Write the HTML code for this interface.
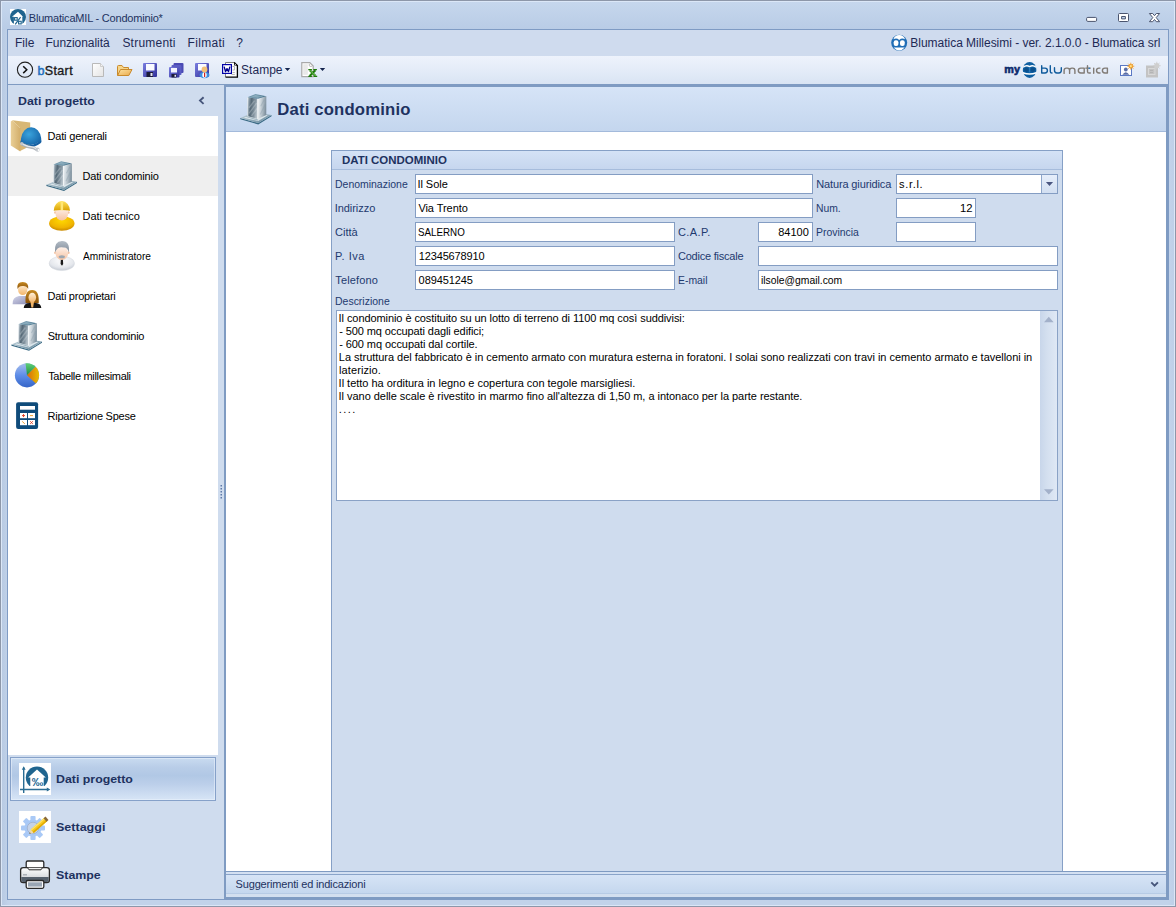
<!DOCTYPE html>
<html><head><meta charset="utf-8">
<style>
*{box-sizing:border-box;margin:0;padding:0}
html,body{width:1176px;height:907px;overflow:hidden}
body{font-family:"Liberation Sans",sans-serif;background:#c2d3ea;position:relative}
div{position:absolute}
.t{white-space:pre;line-height:16px;height:16px}
#frame{left:0;top:0;width:1176px;height:907px;border:1px solid #8d97a9;box-shadow:inset 0 0 0 1px #dbe7f7;background:linear-gradient(90deg,#b7c9e2 0,#c2d3ea 8px,#c2d3ea 1168px,#bccee7 1176px)}
#tgrad{left:2px;top:2px;width:1172px;height:27px;background:linear-gradient(#c6d7ed,#b9cce6)}
#inner{left:7px;top:29px;width:1162px;height:871px;border:1px solid #7f9bc4;background:#cfdcee}
#menubar{left:8px;top:30px;width:1160px;height:26px;background:#cfdbee}
#toolbar{left:8px;top:56px;width:1160px;height:28px;background:linear-gradient(#eef3fc,#e4ecf8 50%,#d9e4f3)}
#tbline{left:8px;top:84px;width:1160px;height:1px;background:#7f9bc2}
#side{left:8px;top:85px;width:216px;height:814px;background:#cfdcee}
#navlist{left:8px;top:116px;width:210px;height:639px;background:#fff}
#navsel{left:8px;top:156px;width:210px;height:40px;background:#efefef}
#bigsel{left:10px;top:757px;width:206px;height:44px;background:linear-gradient(#c9dbf0 0,#b9cde8 22%,#b1c8e5 42%,#bccfea 62%,#d7e5f6 100%);border:1px solid #86a1c9;box-shadow:inset 0 0 0 1px rgba(235,243,252,.55)}
#main{left:224px;top:84px;width:944px;height:815px;background:#fff;border:2px solid #7f9bc2;border-top-width:3px}
#mainhead{left:226px;top:87px;width:940px;height:45px;background:linear-gradient(#d6e4f7,#c4d6ee);border-bottom:1px solid #a3badb}
#group{left:331px;top:150px;width:732px;height:721px;background:#cfdcee;border:1px solid #86a0c6;border-bottom:none}
#ghead{left:332px;top:151px;width:730px;height:19px;background:linear-gradient(#d4e2f6,#c6d6ee);border-bottom:1px solid #a6bcdc}
.inp{height:20px;background:#fff;border:1px solid #849dc3}
#desc{left:336px;top:310px;width:722px;height:191px;background:#fff;border:1px solid #8aa2c6}
#sb{left:1040px;top:311px;width:17px;height:189px;background:linear-gradient(90deg,#c8d6ea,#d3dfef 40%,#dfe8f5)}
#ddb{left:1041px;top:175px;width:16px;height:18px;background:linear-gradient(#e6eefa,#d2dff1);border-left:1px solid #8ea6ca}
#sugg{left:226px;top:871px;width:940px;height:26px;background:linear-gradient(#7f9bc2 0,#7f9bc2 1px,#d3e0f2 1px,#d3e0f2 3px,#8aa4c9 3px,#8aa4c9 4px,#d6e4f6 4px,#c5d7ee 22px,#b7cbe5 22px,#b7cbe5 23px,#d3dfef 23px)}
</style></head><body>
<div id="frame"></div>
<div id="tgrad"></div>
<div id="inner"></div>
<div id="menubar"></div>
<div id="toolbar"></div>
<div id="tbline"></div>
<div id="side"></div>
<div id="navlist"></div>
<div id="navsel"></div>
<div id="bigsel"></div>
<div id="main"></div>
<div id="mainhead"></div>
<div id="group"></div>
<div id="ghead"></div>
<div class="inp" style="left:415px;top:174px;width:398px"></div>
<div class="inp" style="left:896px;top:174px;width:162px"></div>
<div id="ddb"></div>
<div class="inp" style="left:415px;top:198px;width:398px"></div>
<div class="inp" style="left:896px;top:198px;width:80px"></div>
<div class="inp" style="left:415px;top:222px;width:260px"></div>
<div class="inp" style="left:758px;top:222px;width:55px"></div>
<div class="inp" style="left:896px;top:222px;width:80px"></div>
<div class="inp" style="left:415px;top:246px;width:260px"></div>
<div class="inp" style="left:758px;top:246px;width:300px"></div>
<div class="inp" style="left:415px;top:270px;width:260px"></div>
<div class="inp" style="left:758px;top:270px;width:300px"></div>
<div id="desc"></div>
<div id="sb"></div>
<div id="sugg"></div>
<div class="t" style="left:28.75px;top:10.0px;font-size:11px;font-weight:normal;color:#1e3260;letter-spacing:-0.194px;">BlumaticaMIL - Condominio*</div>
<div class="t" style="left:14.57px;top:35.0px;font-size:12px;font-weight:normal;color:#1e2a55;transform:scaleX(1.0009);transform-origin:0 0;">File</div>
<div class="t" style="left:45.62px;top:35.0px;font-size:12px;font-weight:normal;color:#1e2a55;letter-spacing:-0.067px;">Funzionalità</div>
<div class="t" style="left:122.40px;top:35.0px;font-size:12px;font-weight:normal;color:#1e2a55;letter-spacing:0.221px;">Strumenti</div>
<div class="t" style="left:187.62px;top:35.0px;font-size:12px;font-weight:normal;color:#1e2a55;letter-spacing:0.297px;">Filmati</div>
<div class="t" style="left:236.27px;top:35.0px;font-size:12px;font-weight:normal;color:#1e2a55;letter-spacing:0.000px;">?</div>
<div class="t" style="left:910.37px;top:35.0px;font-size:12px;font-weight:normal;color:#1e2a55;letter-spacing:-0.028px;">Blumatica Millesimi - ver. 2.1.0.0 - Blumatica srl</div>
<div class="t" style="left:241.07px;top:62.0px;font-size:12px;font-weight:normal;color:#1e2a55;letter-spacing:0.017px;">Stampe</div>
<div class="t" style="left:17.68px;top:93.0px;font-size:11.5px;font-weight:bold;color:#1e3260;transform:scaleX(1.0736);transform-origin:0 0;">Dati progetto</div>
<div class="t" style="left:47.56px;top:128.0px;font-size:11px;font-weight:normal;color:#000;letter-spacing:-0.189px;">Dati generali</div>
<div class="t" style="left:82.48px;top:168.0px;font-size:11px;font-weight:normal;color:#000;letter-spacing:-0.170px;">Dati condominio</div>
<div class="t" style="left:82.48px;top:208.0px;font-size:11px;font-weight:normal;color:#000;letter-spacing:-0.010px;">Dati tecnico</div>
<div class="t" style="left:82.86px;top:248.0px;font-size:11px;font-weight:normal;color:#000;transform:scaleX(0.9185);transform-origin:0 0;">Amministratore</div>
<div class="t" style="left:47.56px;top:288.0px;font-size:11px;font-weight:normal;color:#000;letter-spacing:-0.259px;">Dati proprietari</div>
<div class="t" style="left:47.73px;top:328.0px;font-size:11px;font-weight:normal;color:#000;letter-spacing:-0.249px;">Struttura condominio</div>
<div class="t" style="left:48.17px;top:368.0px;font-size:11px;font-weight:normal;color:#000;letter-spacing:-0.320px;">Tabelle millesimali</div>
<div class="t" style="left:47.60px;top:408.0px;font-size:11px;font-weight:normal;color:#000;letter-spacing:-0.244px;">Ripartizione Spese</div>
<div class="t" style="left:56.47px;top:771.0px;font-size:11.5px;font-weight:bold;color:#1e3260;transform:scaleX(1.0745);transform-origin:0 0;">Dati progetto</div>
<div class="t" style="left:56.40px;top:819.0px;font-size:11.5px;font-weight:bold;color:#1e3260;transform:scaleX(1.0889);transform-origin:0 0;">Settaggi</div>
<div class="t" style="left:56.40px;top:867.0px;font-size:11.5px;font-weight:bold;color:#1e3260;transform:scaleX(1.0771);transform-origin:0 0;">Stampe</div>
<div class="t" style="left:277.27px;top:101.5px;font-size:16.7px;font-weight:bold;color:#1e3260;letter-spacing:0.174px;">Dati condominio</div>
<div class="t" style="left:342.08px;top:152.0px;font-size:11px;font-weight:bold;color:#1e3260;transform:scaleX(1.0418);transform-origin:0 0;">DATI CONDOMINIO</div>
<div class="t" style="left:334.66px;top:176.0px;font-size:11px;font-weight:normal;color:#1e3a6e;transform:scaleX(0.9512);transform-origin:0 0;">Denominazione</div>
<div class="t" style="left:334.64px;top:200.0px;font-size:11px;font-weight:normal;color:#1e3a6e;letter-spacing:-0.042px;">Indirizzo</div>
<div class="t" style="left:335.26px;top:224.0px;font-size:11px;font-weight:normal;color:#1e3a6e;transform:scaleX(1.0052);transform-origin:0 0;">Città</div>
<div class="t" style="left:335.10px;top:248.0px;font-size:11px;font-weight:normal;color:#1e3a6e;letter-spacing:0.515px;">P. Iva</div>
<div class="t" style="left:335.26px;top:272.0px;font-size:11px;font-weight:normal;color:#1e3a6e;letter-spacing:0.142px;">Telefono</div>
<div class="t" style="left:334.67px;top:293.0px;font-size:11px;font-weight:normal;color:#1e3a6e;transform:scaleX(0.9525);transform-origin:0 0;">Descrizione</div>
<div class="t" style="left:816.20px;top:176.0px;font-size:11px;font-weight:normal;color:#1e3a6e;letter-spacing:-0.131px;">Natura giuridica</div>
<div class="t" style="left:815.88px;top:200.0px;font-size:11px;font-weight:normal;color:#1e3a6e;transform:scaleX(0.9412);transform-origin:0 0;">Num.</div>
<div class="t" style="left:816.10px;top:224.0px;font-size:11px;font-weight:normal;color:#1e3a6e;transform:scaleX(0.9486);transform-origin:0 0;">Provincia</div>
<div class="t" style="left:677.99px;top:224.0px;font-size:11px;font-weight:normal;color:#1e3a6e;letter-spacing:0.382px;">C.A.P.</div>
<div class="t" style="left:677.99px;top:248.0px;font-size:11px;font-weight:normal;color:#1e3a6e;letter-spacing:-0.225px;">Codice fiscale</div>
<div class="t" style="left:678.03px;top:272.0px;font-size:11px;font-weight:normal;color:#1e3a6e;transform:scaleX(0.9465);transform-origin:0 0;">E-mail</div>
<div class="t" style="left:417.42px;top:176.0px;font-size:11px;font-weight:normal;color:#000;letter-spacing:-0.033px;">Il Sole</div>
<div class="t" style="left:418.39px;top:200.0px;font-size:11px;font-weight:normal;color:#000;letter-spacing:-0.053px;">Via Trento</div>
<div class="t" style="left:417.93px;top:224.0px;font-size:11px;font-weight:normal;color:#000;transform:scaleX(0.8896);transform-origin:0 0;">SALERNO</div>
<div class="t" style="left:418.78px;top:248.0px;font-size:11px;font-weight:normal;color:#000;letter-spacing:-0.149px;">12345678910</div>
<div class="t" style="left:418.62px;top:272.0px;font-size:11px;font-weight:normal;color:#000;letter-spacing:-0.091px;">089451245</div>
<div class="t" style="left:899.02px;top:176.0px;font-size:11px;font-weight:normal;color:#000;letter-spacing:0.691px;">s.r.l.</div>
<div class="t" style="left:959.78px;top:200.0px;font-size:11px;font-weight:normal;color:#000;transform:scaleX(1.0227);transform-origin:0 0;">12</div>
<div class="t" style="left:778.25px;top:224.0px;font-size:11px;font-weight:normal;color:#000;letter-spacing:-0.007px;">84100</div>
<div class="t" style="left:760.75px;top:272.0px;font-size:11px;font-weight:normal;color:#000;transform:scaleX(0.9408);transform-origin:0 0;">ilsole@gmail.com</div>
<div class="t" style="left:338.61px;top:310.0px;font-size:11px;font-weight:normal;color:#000;letter-spacing:-0.078px;">Il condominio è costituito su un lotto di terreno di 1100 mq così suddivisi:</div>
<div class="t" style="left:339.14px;top:323.0px;font-size:11px;font-weight:normal;color:#000;letter-spacing:-0.097px;">- 500 mq occupati dagli edifici;</div>
<div class="t" style="left:339.14px;top:336.0px;font-size:11px;font-weight:normal;color:#000;letter-spacing:-0.072px;">- 600 mq occupati dal cortile.</div>
<div class="t" style="left:338.84px;top:349.0px;font-size:11px;font-weight:normal;color:#000;letter-spacing:-0.033px;">La struttura del fabbricato è in cemento armato con muratura esterna in foratoni. I solai sono realizzati con travi in cemento armato e tavelloni in</div>
<div class="t" style="left:339.05px;top:362.0px;font-size:11px;font-weight:normal;color:#000;letter-spacing:0.095px;">laterizio.</div>
<div class="t" style="left:338.61px;top:375.0px;font-size:11px;font-weight:normal;color:#000;letter-spacing:-0.018px;">Il tetto ha orditura in legno e copertura con tegole marsigliesi.</div>
<div class="t" style="left:338.61px;top:388.0px;font-size:11px;font-weight:normal;color:#000;letter-spacing:-0.042px;">Il vano delle scale è rivestito in marmo fino all'altezza di 1,50 m, a intonaco per la parte restante.</div>
<div class="t" style="left:338.84px;top:401.0px;font-size:11px;font-weight:normal;color:#000;letter-spacing:1.403px;">....</div>
<div class="t" style="left:235.59px;top:876.0px;font-size:11px;font-weight:normal;color:#1e3260;letter-spacing:-0.174px;">Suggerimenti ed indicazioni</div>
<div class="t" style="left:37.5px;top:63px;font-size:12.5px;letter-spacing:0.35px;color:#1a1a1a;-webkit-text-stroke:0.35px #1a1a1a"><span style="color:#1f6fbe;-webkit-text-stroke:0.5px #1f6fbe">b</span>Start</div>

<svg id="ico" style="position:absolute;left:0;top:0;pointer-events:none" width="1176" height="907" viewBox="0 0 1176 907">
<defs>
<linearGradient id="gFold" x1="0" y1="0" x2="1" y2="1"><stop offset="0" stop-color="#fde3a3"/><stop offset="1" stop-color="#e9a94a"/></linearGradient>
<linearGradient id="gSave" x1="0" y1="0" x2="1" y2="1"><stop offset="0" stop-color="#7b7fe0"/><stop offset="1" stop-color="#2f2f9a"/></linearGradient>
<linearGradient id="gTan" x1="0" y1="0" x2="1" y2="0"><stop offset="0" stop-color="#e9cf97"/><stop offset="1" stop-color="#d3ae6a"/></linearGradient>
<radialGradient id="gHelm" cx="0.4" cy="0.4" r="0.7"><stop offset="0" stop-color="#3aa3dc"/><stop offset="1" stop-color="#1462a6"/></radialGradient>
<linearGradient id="gTow" x1="0" y1="0" x2="1" y2="0"><stop offset="0" stop-color="#d9e2e8"/><stop offset="0.25" stop-color="#6d8290"/><stop offset="0.55" stop-color="#a5b4be"/><stop offset="0.62" stop-color="#e8eef2"/><stop offset="1" stop-color="#8fa2ae"/></linearGradient>
<linearGradient id="gRoof" x1="0" y1="0" x2="1" y2="1"><stop offset="0" stop-color="#8fb0c2"/><stop offset="1" stop-color="#2f5f7a"/></linearGradient>
<linearGradient id="gBase" x1="0" y1="0" x2="1" y2="1"><stop offset="0" stop-color="#c9d8e0"/><stop offset="1" stop-color="#5f8498"/></linearGradient>
<radialGradient id="gYel" cx="0.5" cy="0.3" r="0.8"><stop offset="0" stop-color="#ffd800"/><stop offset="0.6" stop-color="#f0b400"/><stop offset="1" stop-color="#b87600"/></radialGradient>
<linearGradient id="gYel2" x1="0" y1="0" x2="0" y2="1"><stop offset="0" stop-color="#ffe25a"/><stop offset="1" stop-color="#d9a000"/></linearGradient>
<linearGradient id="gSkin" x1="0" y1="0" x2="0" y2="1"><stop offset="0" stop-color="#fff4ee"/><stop offset="1" stop-color="#f6c3a2"/></linearGradient>
<radialGradient id="gCoat" cx="0.5" cy="0.3" r="0.8"><stop offset="0" stop-color="#ffffff"/><stop offset="0.6" stop-color="#e4e7ec"/><stop offset="1" stop-color="#b5bcc7"/></radialGradient>
<linearGradient id="gHair" x1="0" y1="0" x2="0" y2="1"><stop offset="0" stop-color="#b3bcc6"/><stop offset="1" stop-color="#7f8b98"/></linearGradient>
<linearGradient id="gBrown" x1="0" y1="0" x2="0" y2="1"><stop offset="0" stop-color="#c78a22"/><stop offset="1" stop-color="#8a5208"/></linearGradient>
<linearGradient id="gSkin2" x1="0" y1="0" x2="0" y2="1"><stop offset="0" stop-color="#fff0d8"/><stop offset="1" stop-color="#f3b56a"/></linearGradient>
<linearGradient id="gLil" x1="0" y1="0" x2="1" y2="1"><stop offset="0" stop-color="#d4d6ea"/><stop offset="1" stop-color="#8d8fb5"/></linearGradient>
<linearGradient id="gBlue" x1="0" y1="0" x2="0" y2="1"><stop offset="0" stop-color="#a9bfec"/><stop offset="0.5" stop-color="#5e8de8"/><stop offset="1" stop-color="#3565c8"/></linearGradient>
<linearGradient id="gGreen" x1="0" y1="0" x2="0" y2="1"><stop offset="0" stop-color="#5fd07a"/><stop offset="1" stop-color="#1f8f3a"/></linearGradient>
<linearGradient id="gOr" x1="0" y1="0" x2="1" y2="0"><stop offset="0" stop-color="#d96a08"/><stop offset="1" stop-color="#e8c000"/></linearGradient>
<linearGradient id="gPrn" x1="0" y1="0" x2="0" y2="1"><stop offset="0" stop-color="#ffffff"/><stop offset="1" stop-color="#c4c8cd"/></linearGradient>
<linearGradient id="gPage" x1="0" y1="0" x2="1" y2="1"><stop offset="0" stop-color="#ffffff"/><stop offset="1" stop-color="#e4e4e4"/></linearGradient>
</defs>

<!-- app icon -->
<g>
<rect x="10" y="9" width="16" height="16" fill="#fff"/>
<circle cx="18" cy="17" r="8" fill="#1f648f"/>
<path d="M18 11.8 L23 16.8 L22.3 16.8 L22.3 25 L13.9 25 L13.9 16.8 L12 16.8 Z" fill="#fff"/>
<g fill="none" stroke="#1f648f"><rect x="14.600" y="17.600" width="2.600" height="2.600" stroke-width="1.100"/><rect x="18.600" y="21.300" width="2.600" height="2.600" stroke-width="1.100"/><path d="M20.600 17.200 L15.200 24.400" stroke-width="1.200"/></g>
</g>

<!-- window buttons -->
<g fill="#fff" stroke="#4a546e" stroke-width="1" stroke-linejoin="round">
<rect x="1086.600" y="17.400" width="10" height="4" rx="1.200"/>
<path fill-rule="evenodd" d="M1119.500 13.500 h8 q1 0 1 1 v6 q0 1 -1 1 h-8 q-1 0 -1 -1 v-6 q0 -1 1 -1z M1121.600 16.500 v2.400 h3.800 v-2.400z"/>
<path d="M1149.400 13.500 h3.300 l1.800 2.200 l1.800 -2.200 h3.300 l-3.400 4.100 l3.400 4.100 h-3.300 l-1.800 -2.200 l-1.800 2.200 h-3.300 l3.400 -4.100 z"/>
</g>
<!-- menubar owl -->
<g>
<circle cx="899.200" cy="42.800" r="8" fill="#1f6db6"/>
<path d="M893.400 39.300 Q894.500 35.300 899.200 35.100 Q903.900 35.300 905 39.300 Q902 37.300 899.200 39.900 Q896.400 37.300 893.400 39.300Z" fill="#fff"/>
<rect x="893.700" y="40.300" width="4.700" height="5.600" rx="2" fill="#fff"/>
<rect x="900" y="40.300" width="4.700" height="5.600" rx="2" fill="#fff"/>
<path d="M893.600 47.500 L904.800 47.500 Q899.200 53.600 893.600 47.500Z" fill="#fff"/>
</g>

<!-- bStart -->
<circle cx="25" cy="69.7" r="7.6" fill="none" stroke="#222" stroke-width="1.1"/>
<path d="M23.2 66.3 L26.8 69.7 L23.2 73.1" fill="none" stroke="#111" stroke-width="1.5"/>

<!-- new doc -->
<path d="M92.5 63.5 H100.5 L103.5 66.5 V76.5 H92.5 Z" fill="url(#gPage)" stroke="#b9b9b9" stroke-width="1"/>
<path d="M100.5 63.5 V66.5 H103.5" fill="#f4f4f4" stroke="#c4c4c4" stroke-width="0.8"/>
<!-- open folder -->
<path d="M117.5 75.5 V66.5 Q117.5 65.5 118.5 65.5 H122 L123.5 67.5 H128.5 V70" fill="#f6d58a" stroke="#c98a2c" stroke-width="1"/>
<path d="M117.6 75.5 L120.5 69.5 H132 L128.8 75.5 Z" fill="url(#gFold)" stroke="#c98a2c" stroke-width="1"/>
<!-- save -->
<g id="flop">
<rect x="143" y="63" width="14" height="14" rx="1" fill="url(#gSave)"/>
<rect x="146" y="64" width="8.5" height="6.5" fill="#fafbff"/>
<rect x="146.5" y="72" width="6.5" height="5" fill="#1c1c38"/>
<rect x="150.5" y="73" width="2" height="3" fill="#e6e6f5"/>
</g>
<!-- save all -->
<g>
<rect x="173.5" y="63" width="10" height="10" rx="1" fill="#4a4ab4"/>
<rect x="171.5" y="65" width="10" height="10" rx="1" fill="#5a5cc4"/>
<rect x="169" y="67" width="10.5" height="10.5" rx="1" fill="url(#gSave)"/>
<rect x="171" y="68" width="6" height="4.5" fill="#f4f5ff"/>
<rect x="171.500" y="74" width="5" height="3.5" fill="#1c1c38"/>
<rect x="174.500" y="74.800" width="1.500" height="2" fill="#e6e6f5"/>
</g>
<!-- save user -->
<g>
<rect x="195" y="63" width="14" height="14" rx="1" fill="url(#gSave)"/>
<rect x="198" y="64" width="8.5" height="6.5" fill="#fafbff"/>
<ellipse cx="204.500" cy="75" rx="5" ry="3.2" fill="#3f8fe0"/>
<ellipse cx="204.500" cy="75" rx="2.2" ry="2.8" fill="#fff"/>
<rect x="204" y="72.500" width="1.200" height="4.500" fill="#d02020"/>
<circle cx="204.500" cy="69.500" r="2.900" fill="#f2c078"/>
</g>
<!-- word -->
<g>
<path d="M225.500 62.500 H234.500 L237.500 65.500 V77 H225.500 Z" fill="#fdfdfd"/>
<path d="M225.500 77 V62.500 H234.500" fill="none" stroke="#7f7f7f" stroke-width="1"/>
<path d="M234.200 62.400 L237.400 65.600 V77.100 H225.500" fill="none" stroke="#000" stroke-width="1.300"/>
<path d="M234.200 62.400 V65.600 H237.400 Z" fill="#000"/>
<rect x="235.100" y="63.900" width="0.900" height="0.900" fill="#fff"/>
<path d="M232.500 66.500 H234.500 V70 H232.500 M232.500 72.500 H234.800 M231.500 74.500 H234.800" stroke="#b0b0b0" stroke-width="0.900" fill="none"/>
<rect x="222.600" y="64.600" width="8.800" height="8.800" fill="#fff" stroke="#0000a8" stroke-width="1.200"/>

<path d="M224.300 67.300 L225.500 71.600 L227 68.600 L228.500 71.600 L229.700 67.300" fill="none" stroke="#000090" stroke-width="1.350" stroke-linejoin="round" stroke-linecap="square"/>
</g>
<path d="M284.800 67.900 H290.200 L287.500 71 Z M319.800 67.900 H325.200 L322.500 71 Z" fill="#16264f"/>
<!-- excel doc -->
<g>
<path d="M301.800 62.600 H309.800 L313.200 66 V76.700 H301.800 Z" fill="#fff" stroke="#a9a9a9" stroke-width="1.200"/>
<rect x="303.200" y="64.200" width="4.600" height="10.600" fill="#e9e9e9"/>
<path d="M309.300 63.800 V65.300 Q309.300 66.400 310.400 66.400 H311.800" fill="none" stroke="#b0b0b0" stroke-width="0.900"/>
<path d="M309.800 70.200 L315.600 76 M315.400 70.200 L309.600 76" stroke="#1f7a0c" stroke-width="2"/>
<path d="M308.300 69.700 H311.900 M313.300 69.700 H316.900 M308.300 76.300 H311.900 M313.600 76.400 H317.200" stroke="#1f7a0c" stroke-width="1.300"/>
<path d="M310 70.300 L315.600 76" stroke="#86d86e" stroke-width="0.900"/>
</g>

<!-- my blumatica -->
<text x="1004.300" y="72.700" font-family="Liberation Sans" font-weight="bold" font-size="10" fill="#0b2a6c" stroke="#0b2a6c" stroke-width="0.550" textLength="15.600" lengthAdjust="spacingAndGlyphs">my</text>
<g>
<ellipse cx="1029.600" cy="69.900" rx="6.800" ry="8" fill="#0f60a2"/>
<path d="M1023.100 67.300 Q1026.300 64.600 1029.600 66.600 Q1032.900 64.600 1036.100 67.300" fill="none" stroke="#fff" stroke-width="1.300"/>
<path d="M1022.800 72.700 Q1029.600 75.400 1036.400 72.700" fill="none" stroke="#fff" stroke-width="1.500"/>
<ellipse cx="1026.400" cy="69.800" rx="2.300" ry="2.300" fill="#0a4f8c"/>
<ellipse cx="1032.800" cy="69.800" rx="2.300" ry="2.300" fill="#0a4f8c"/>
<path d="M1029.600 67 V72.500" stroke="#3b86c4" stroke-width="0.700"/>
</g>
<g fill="none" stroke-width="1.400" stroke-linecap="round" stroke-linejoin="round">
<g stroke="#0f5b9c">
<path d="M1041.7 65.7 V73.0 H1045.0 Q1047.4 73.0 1047.4 70.55 Q1047.4 68.1 1045.0 68.1 H1041.7"/>
<path d="M1050.300 65.7 V71.4 Q1050.300 73.0 1052 73.0"/>
<path d="M1054.5 67.69999999999999 V70.6 Q1054.5 73.0 1056.9 73.0 H1058.8999999999999 Q1061.3 73.0 1061.3 70.6 V67.69999999999999"/>
</g>
<g stroke="#807b75">
<path d="M1064.1 73.4 V70.39999999999999 Q1064.1 68.1 1066.3999999999999 68.1 H1067.3 Q1069.6 68.1 1069.6 70.39999999999999 V73.4 M1069.6 70.39999999999999 Q1069.6 68.1 1071.8999999999999 68.1 H1072.6000000000001 Q1074.9 68.1 1074.9 70.39999999999999 V73.4"/>
<path d="M1084.2 68.1 V73.0 H1080.8 Q1078.3 73.0 1078.3 70.55 Q1078.3 68.1 1080.8 68.1 H1084.2"/>
<path d="M1087.500 65.7 V71.4 Q1087.500 73.0 1089.100 73.0 H1090.300 M1085.800 68.1 H1090.300"/>
<path d="M1093.700 68.1 V73.3"/>
<path d="M1100 68.1 H1099.0 Q1096.5 68.1 1096.5 70.55 Q1096.5 73.0 1099.0 73.0 H1100"/>
<path d="M1107.4 68.1 V73.0 H1104.9 Q1102.4 73.0 1102.4 70.55 Q1102.4 68.1 1104.9 68.1 H1107.4"/>
</g></g>
<circle cx="1089.200" cy="68.300" r="0.800" fill="#1f78c4"/>
<!-- user card star -->
<g>
<rect x="1120.500" y="65.500" width="11" height="10" fill="#fff" stroke="#5a78c4" stroke-width="1"/>
<circle cx="1125.800" cy="69.500" r="1.900" fill="#5a6ea6"/>
<path d="M1122.300 74.800 Q1125.800 69.500 1129.300 74.800Z" fill="#5a6ea6"/>
<circle cx="1130.800" cy="66.200" r="2.300" fill="#f0a030"/>
<path d="M1130.800 62.700 V69.700 M1127.300 66.200 H1134.300 M1128.300 63.700 L1133.300 68.700 M1133.300 63.700 L1128.300 68.700" stroke="#f0a030" stroke-width="0.900"/>
<circle cx="1130.800" cy="66.200" r="1.100" fill="#ffe08a"/>
</g>
<g>
<rect x="1146" y="65.500" width="12" height="12" fill="#c3c3c3"/>
<rect x="1148.500" y="68.500" width="6.500" height="6" fill="none" stroke="#d8d8d8" stroke-width="1"/>
<path d="M1150 70.500 H1153 M1150 72.500 H1153" stroke="#b0b0b0" stroke-width="0.800"/>
<circle cx="1156.800" cy="65.700" r="2.600" fill="#cfcfcf"/>
<path d="M1156.800 61.800 V69.600 M1152.900 65.700 H1160.700 M1154 63 L1159.600 68.400 M1159.600 63 L1154 68.400" stroke="#cfcfcf" stroke-width="0.900"/>
</g>
</svg>
<svg id="ico2" style="position:absolute;left:0;top:0;pointer-events:none" width="1176" height="907" viewBox="0 0 1176 907">
<defs>
<g id="bld">
<polygon points="0,23.5 17.6,28.5 30.6,20.5 30.6,21.8 17.6,29.8 0,24.8" fill="#3a6a84"/>
<polygon points="0,23.5 13,18 30.6,20.5 17.6,28.5" fill="url(#gBase)"/>
<polygon points="3.5,23.2 13.2,19.4 27,20.9 17.5,26.4" fill="#dce6eb"/>
<polygon points="6,22.6 17.3,26 17.3,25 6,21.8" fill="#7d99a8" opacity="0.7"/>
<polygon points="7,3.2 17.1,4.6 17.1,24.6 7,21.6" fill="url(#gTowL)"/>
<polygon points="17.1,4.6 25.5,2.3 25.5,20.6 17.1,24.6" fill="url(#gTowR)"/>
<polygon points="7,3.2 14.8,0 25.5,2.3 17.1,4.6" fill="url(#gRoof)"/>
<polygon points="9.5,3.1 14.9,0.9 22.8,2.4 17,3.8" fill="#a8c4d2" opacity="0.55"/>
<path d="M8.5 19 L16 9 M8.5 13.5 L14 6.5 M11 21.5 L16.5 14" stroke="#e8eef2" stroke-width="1.3" opacity="0.28"/>
<path d="M17.1 4.6 V24.6" stroke="#f4f7f9" stroke-width="0.9"/>
<path d="M7.3 3.4 V21.6" stroke="#eef2f5" stroke-width="0.8"/>
<path d="M19.5 20 L24.5 10 M20 12 L23.5 5.5" stroke="#8398a6" stroke-width="1.1" opacity="0.35"/>
</g>
<linearGradient id="gTowL" x1="0" y1="0" x2="1" y2="0.25"><stop offset="0" stop-color="#dfe6ea"/><stop offset="0.14" stop-color="#93a3ae"/><stop offset="0.4" stop-color="#566a78"/><stop offset="0.75" stop-color="#7f909c"/><stop offset="1" stop-color="#b4c0c8"/></linearGradient>
<linearGradient id="gTowR" x1="0" y1="0" x2="1" y2="0.2"><stop offset="0" stop-color="#f2f5f7"/><stop offset="0.4" stop-color="#cdd6dc"/><stop offset="1" stop-color="#8193a0"/></linearGradient>
</defs>

<!-- collapse chevron -->
<path d="M203.600 97.300 L200 100.600 L203.600 103.900" fill="none" stroke="#46557a" stroke-width="1.900"/>
<!-- splitter dots -->
<g fill="#5f7aa8"><rect x="220.500" y="485" width="1.500" height="1.500"/><rect x="220.500" y="488" width="1.500" height="1.500"/><rect x="220.500" y="491" width="1.500" height="1.500"/><rect x="220.500" y="494" width="1.500" height="1.500"/><rect x="220.500" y="497" width="1.500" height="1.500"/></g>

<!-- Dati generali: folder + helmet -->
<g>
<polygon points="12.5,120.3 30.2,122.6 30.2,146 20,151 20,128" fill="#d8b775"/>
<polygon points="10.8,121.6 12.5,120.3 20.3,128.2 20.3,151.5 10.8,145.5" fill="url(#gTan)"/>
<path d="M20.5 140.5 Q31 149.500 41.300 139.500 Q42 141.800 40.500 143.300 Q31 150.300 21.300 145 Q20 143 20.500 140.500Z" fill="#155fa2"/>
<path d="M21 138.500 A10.200 13 0 0 1 41.200 138.300 Q41.500 140.500 40 141.500 Q31 148 21.600 142 Q20.500 140.500 21 138.500Z" fill="url(#gHelm)"/>
<path d="M22 144.300 L27.500 146.600 L33.500 147.800 L36.500 149.500" fill="none" stroke="#aeb4ba" stroke-width="2.800" stroke-linecap="round"/>
<path d="M22 143.900 L27.500 146.100 L33.500 147.300 L36.500 148.900" fill="none" stroke="#e9ecef" stroke-width="1.100" stroke-linecap="round"/>
<circle cx="37.600" cy="149.700" r="2.100" fill="#c2c7cc"/><circle cx="38.600" cy="150.100" r="1" fill="#fff"/>
<circle cx="21.800" cy="143.600" r="1.700" fill="#c2c7cc"/>
</g>

<!-- buildings -->
<use href="#bld" x="46.400" y="161.200"/>
<use href="#bld" x="11.400" y="321"/>
<use href="#bld" transform="translate(240.300,94) scale(1.020)"/>

<!-- tecnico -->
<g>
<ellipse cx="61.800" cy="223.500" rx="12.700" ry="7.300" fill="url(#gYel)"/>
<circle cx="55.300" cy="212.500" r="1.300" fill="#f2c3a4"/><circle cx="68.400" cy="212.500" r="1.300" fill="#f2c3a4"/>
<ellipse cx="61.800" cy="213.800" rx="6.300" ry="6.800" fill="url(#gSkin)"/>
<path d="M53.700 210.800 A8.150 9.700 0 0 1 70 210.800 Q61.800 209 53.700 210.800Z" fill="url(#gYel2)"/>
<rect x="60.600" y="201.300" width="2.500" height="9" fill="#ffe774"/>
</g>
<!-- amministratore -->
<g>
<ellipse cx="61.800" cy="263.400" rx="12.700" ry="7.200" fill="url(#gCoat)" stroke="#d4d8de" stroke-width="0.500"/>
<polygon points="57,257.500 61.800,260 58.800,266" fill="#f4f5f7"/><polygon points="66.600,257.500 61.800,260 64.800,266" fill="#f4f5f7"/>
<polygon points="60.900,259 62.900,259 63.200,264 62,265.800 60.600,264" fill="#1a1a1a"/>
<circle cx="55.300" cy="252.800" r="1.300" fill="#f2c3a4"/><circle cx="68.400" cy="252.800" r="1.300" fill="#f2c3a4"/>
<ellipse cx="61.800" cy="253.200" rx="6.300" ry="6.900" fill="url(#gSkin)"/>
<ellipse cx="61.800" cy="256.700" rx="3.100" ry="1.500" fill="#9da7b1"/>
<path d="M55 252.500 Q53.800 241.300 62 241.100 Q70.300 241.300 68.800 252.500 Q67.500 247 63.500 247.500 Q57.500 246 55 252.500Z" fill="url(#gHair)"/>
</g>
<!-- proprietari -->
<g>
<path d="M12.600 304.200 Q12.300 297 19 296 H26 Q28.200 296.500 28.200 300 V304.200 Z" fill="url(#gLil)"/>
<ellipse cx="22.700" cy="289.600" rx="4.700" ry="5.500" fill="url(#gSkin2)"/>
<path d="M17.500 289 Q16.300 282 22.700 281.900 Q29 282 28.200 289 Q26.500 285.500 22.500 286 Q19 285.800 17.500 289Z" fill="url(#gBrown)"/>
<path d="M25.600 303 Q24.500 290 32.100 290 Q39.500 290 38.700 303 Z" fill="url(#gBrown)"/>
<path d="M23.700 308 Q24 303.300 29 302.900 H36 Q41 303.300 41.300 308 Z" fill="#141414"/>
<polygon points="30.500,301.500 34,301.500 33.200,307.600 31.300,307.600" fill="#f0b468"/>
<ellipse cx="32.300" cy="297.600" rx="3.800" ry="4.800" fill="url(#gSkin2)"/>
</g>
<!-- pie -->
<g>
<circle cx="27" cy="375.300" r="12.100" fill="url(#gBlue)"/>
<path d="M27 375.300 L25.530 363.290 A12.100 12.100 0 0 1 35.560 366.740 Z" fill="url(#gGreen)"/>
<path d="M27 375.300 L35.560 366.740 A12.100 12.100 0 0 1 35.850 383.550 Z" fill="url(#gOr)"/>
</g>
<!-- calculator -->
<g>
<rect x="16.100" y="402.300" width="22" height="26.700" rx="2" fill="#0f4b7a"/>
<rect x="20" y="406" width="15" height="3.700" fill="#fff"/>
<rect x="20" y="413" width="7" height="5.200" fill="#fff"/><rect x="28" y="413" width="7" height="5.200" fill="#fff"/>
<rect x="20" y="420" width="7" height="5.200" fill="#fff"/><rect x="28" y="420" width="7" height="5.200" fill="#fff"/>
<path d="M22 415.600 H25 M23.500 414.100 V417.100" stroke="#e2452a" stroke-width="1"/>
<path d="M30 415.600 H33" stroke="#f0a030" stroke-width="1"/>
<path d="M22.200 421.400 L24.800 423.800" stroke="#f0a030" stroke-width="1"/>
<path d="M30.200 421.300 L32.800 423.900 M32.800 421.300 L30.200 423.900" stroke="#e2452a" stroke-width="1"/>
</g>

<!-- big: dati progetto icon -->
<g>
<rect x="19" y="763" width="32" height="32" fill="#fff"/>
<circle cx="37" cy="777.600" r="11.200" fill="#20658f"/>
<rect x="26" y="786" width="24" height="4" fill="#fff"/>
<path d="M37 769.600 L45.800 777.500 L43.700 777.500 L43.700 789 L30.300 789 L30.300 777.500 L28.200 777.500 Z" fill="#fff"/>
<text x="37.200" y="786" font-family="Liberation Sans" font-weight="bold" font-size="11.500" fill="#20658f" text-anchor="middle" letter-spacing="-0.700">‰</text>
<path d="M23.700 793 V767.500 M20 789.500 H48.500" stroke="#2a6d94" stroke-width="1.400" fill="none"/>
<path d="M21.800 769.800 L23.700 766.300 L25.600 769.800 Z M46.800 787.600 L50.300 789.500 L46.800 791.400 Z" fill="#2a6d94"/>
</g>
<!-- big: settaggi -->
<g>
<rect x="19" y="811" width="32" height="32" fill="#fff"/>
<g transform="translate(33,828)" fill="#a9c9f6">
<circle r="8.600"/>
<g id="teeth"><rect x="-2.600" y="-12" width="5.200" height="24" rx="1"/><rect x="-12" y="-2.600" width="24" height="5.200" rx="1"/></g>
<use href="#teeth" transform="rotate(45)"/>
<circle r="5.800" fill="#c4d2e8" stroke="#9fb0cc" stroke-width="0.800"/>
</g>
<g transform="translate(29.200,833.800) rotate(-41)">
<polygon points="0,0 4,-2.300 4,2.300" fill="#f3d9a8"/><polygon points="0,0 1.500,-0.900 1.500,0.900" fill="#555"/>
<rect x="4" y="-2.300" width="18" height="4.600" fill="#f7c81e"/><rect x="4" y="-2.300" width="18" height="1.500" fill="#fde26a"/><rect x="4" y="0.900" width="18" height="1.400" fill="#e0a800"/>
<rect x="21" y="-2.300" width="2.600" height="4.600" fill="#8a6a3a"/>
</g>
</g>
<!-- big: stampe printer -->
<g>
<rect x="26.200" y="861" width="17.600" height="10" rx="1.500" fill="#fff" stroke="#2a2a2a" stroke-width="1.300"/>
<rect x="20.600" y="867.700" width="28.800" height="15" rx="2.600" fill="url(#gPrn)" stroke="#2a2a2a" stroke-width="1.300"/>
<path d="M21.300 877 H48.700 V880.300 Q48.700 882 47 882 H23 Q21.300 882 21.300 880.300Z" fill="#56606c"/>
<path d="M27.500 867.700 L29 869.800 H41 L42.500 867.700" fill="#f2f2f2" stroke="#2a2a2a" stroke-width="1"/>
<rect x="23" y="874.400" width="4" height="0.900" fill="#8a9098"/>
<rect x="26.200" y="880.500" width="17.600" height="7.800" rx="1.500" fill="#fff" stroke="#2a2a2a" stroke-width="1.300"/>
<rect x="28" y="882.300" width="14" height="4.300" fill="#9aa6b4"/>
</g>

<!-- dropdown arrow -->
<path d="M1045.900 182 H1053.100 L1049.500 186.100Z" fill="#4a5680"/>
<!-- scrollbar arrows -->
<path d="M1044 322.300 L1048.800 316.800 L1053.600 322.300Z M1044 489.300 L1048.800 494.500 L1053.600 489.300Z" fill="#a3b1ca"/>
<!-- suggest chevron -->
<path d="M1151.300 882.300 L1154.600 885.600 L1157.900 882.300" fill="none" stroke="#46557a" stroke-width="1.900"/>
</svg>

</body></html>
